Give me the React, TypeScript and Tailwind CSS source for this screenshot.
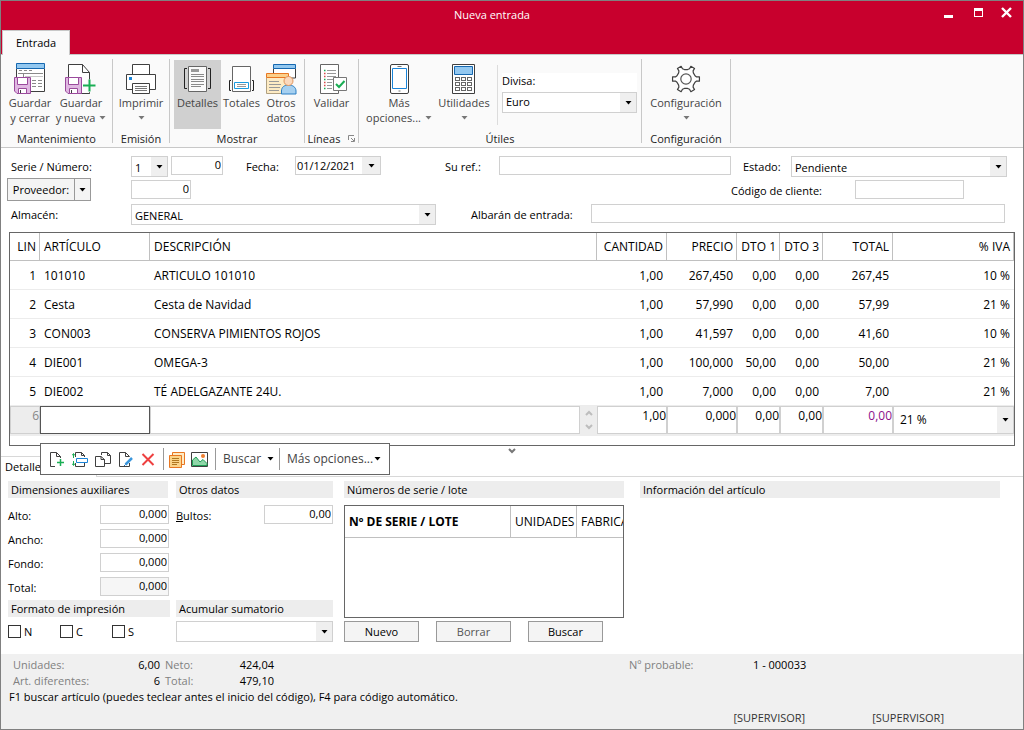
import React, { useId } from "react";

const INK = "#3f3f3f";

/* ---------- Small shared pieces ---------- */

function Caret({ className = "fill-black" }: { className?: string }) {
  return (
    <svg width="7" height="4" viewBox="0 0 7 4" className={className} aria-hidden="true">
      <path d="M0.5 0h6L3.5 3.5z" />
    </svg>
  );
}

function Select({ id, value, className = "", label }: { id?: string; value: string; className?: string; label?: string }) {
  return (
    <div className={`relative h-[21px] border border-[#d0d0d0] bg-white ${className}`}>
      <select id={id} aria-label={label} className="block h-full w-full appearance-none bg-transparent pl-[3px] pr-4 outline-none">
        <option>{value}</option>
      </select>
      <span className="pointer-events-none absolute inset-y-0 right-0 flex w-4 items-center justify-center bg-[#efefef]">
        <Caret />
      </span>
    </div>
  );
}

function TextField({ id, value = "", className = "", readOnly, label }: { id?: string; value?: string; className?: string; readOnly?: boolean; label?: string }) {
  return (
    <input
      id={id}
      aria-label={label}
      defaultValue={value}
      readOnly={readOnly}
      className={`h-[19px] border border-[#d0d0d0] px-px pb-[2px] outline-none ${readOnly ? "bg-[#f6f6f6]" : "bg-white"} ${className}`}
    />
  );
}

/* ---------- Ribbon icons ---------- */

function Icon({ children }: { children: React.ReactNode }) {
  return (
    <svg width="32" height="32" viewBox="0 0 32 32" fill="none" stroke={INK} className="shrink-0" aria-hidden="true">
      {children}
    </svg>
  );
}

function Floppy() {
  return (
    <g stroke="#9a4a9c">
      <path d="M0.5 14.5H16.5V30.5H3L0.5 28z" fill="#e0b8e2" />
      <path d="M3.5 14.5H13.5V21.5H3.5z" fill="#fff" />
      <path d="M4.5 25.5H12.5V30.5H4.5z" fill="#fff" />
      <path d="M6.5 27v3" stroke={INK} />
    </g>
  );
}

function SaveCloseIcon() {
  return (
    <Icon>
      <path d="M2.5 5.5V28.5H30.5V5.5" fill="#fff" />
      <path d="M2.5 0.5H30.5V5.5H2.5z" fill="#93c8f0" stroke="#1668b0" />
      <g stroke="#8a8a8a">
        <path d="M5 7.5h3M10 7.5h3M15 7.5h3M4 10.5h25M9.5 10.5v4M18 17.5h4M24 17.5h4M18 20.5h4M24 20.5h4M18 23.5h4M24 23.5h4" />
        <path d="M11 13.5h18" stroke="#c8c8c8" />
      </g>
      <Floppy />
    </Icon>
  );
}

function SaveNewIcon() {
  return (
    <Icon>
      <path d="M3.5 14V1.5H17.5L24.5 9.5V30.5H14" fill="#fff" />
      <path d="M17.5 1.5V9.5H24.5" />
      <Floppy />
      <path d="M18 23h13M24.5 16.5v13" stroke="#fafafa" strokeWidth="5" />
      <path d="M18 22.5h12.5M24.5 16.5v12" stroke="#1aae54" strokeWidth="2" />
      <path d="M24.5 29.5v1" />
    </Icon>
  );
}

function PrinterIcon() {
  return (
    <Icon>
      <path d="M7.5 11.5V1.5H24.5V11.5" fill="#fff" />
      <path d="M1.5 11.5H30.5V26.5H1.5z" fill="#fff" />
      <path d="M4 14h3v3h-3z" fill="#1a84d8" stroke="none" />
      <path d="M7.5 20.5H24.5V30.5H7.5z" fill="#fff" />
      <path d="M10 23.5h12M10 25.5h12M10 27.5h12" stroke="#777" />
    </Icon>
  );
}

function DetailsIcon() {
  return (
    <Icon>
      <path d="M6.5 3.5H24.5V28.5H6.5z" fill="#fafafa" stroke="#666" />
      <path d="M5 5.5H2.5V25.5H5M26 5.5H28.5V25.5H26" stroke="#222" />
      <path d="M9 6h8v3h-8z" fill="#999" stroke="none" />
      <path d="M9 11.5h13M9 13.5h13M9 16.5h13M9 18.5h13M9 21.5h13M9 23.5h10" stroke="#8a8a8a" />
    </Icon>
  );
}

function TotalsIcon() {
  return (
    <Icon>
      <path d="M6.5 3.5H24.5V28.5H6.5z" fill="#fff" stroke="#666" />
      <path d="M5 17.5H3.5V27.5H5M26 17.5H27.5V27.5H26" stroke="#222" />
      <path d="M8.5 19.5H22.5V25.5H8.5z" fill="#fff" stroke="#1a9be0" />
      <path d="M11 21.5h9M11 23.5h9" stroke="#999" />
    </Icon>
  );
}

function OtherDataIcon() {
  return (
    <Icon>
      <path d="M8.5 5.5V15H30.5V5.5" fill="#fff" />
      <path d="M8.5 1.5H30.5V5.5H8.5z" fill="#93c8f0" stroke="#1668b0" />
      <path d="M1.5 14.5V30.5H23.5V14.5" fill="#fdebc4" stroke="#b0a080" />
      <path d="M1.5 10.5H23.5V14.5H1.5z" fill="#fbd08a" stroke="#e87722" />
      <path d="M4 18.5h10M4 21.5h12M4 24.5h11M4 27.5h10" stroke="#999" />
      <path d="M16.5 31V28c0-4 3-6 7-6s7.5 2 7.5 6v3z" fill="#a6d0f0" stroke="#2a7fc4" />
      <circle cx="23.5" cy="18" r="4.5" fill="#fbd9bd" stroke="#e0945c" />
    </Icon>
  );
}

function ValidateIcon() {
  return (
    <Icon>
      <path d="M4.5 1.5H22.5V30.5H4.5z" fill="#fff" stroke="#666" />
      <path d="M11 7.5h9M11 10.5h9M11 13.5h9M11 16.5h6M11 19.5h5M11 22.5h5M11 25.5h5" stroke="#999" />
      <path d="M8 7.5h1.5M8 16.5h1.5M8 25.5h1.5" stroke="#1aae54" strokeWidth="1.5" />
      <path d="M8 10.5h1.5M8 13.5h1.5M8 19.5h1.5M8 22.5h1.5" stroke="#d84a4a" strokeWidth="1.5" />
      <path d="M17.5 14.5H30.5V27.5H17.5z" fill="#fff" stroke="#777" />
      <path d="M20 21l3 3 5.5-6" stroke="#1aae54" strokeWidth="2" />
    </Icon>
  );
}

function PhoneIcon() {
  return (
    <Icon>
      <rect x="7.5" y="1.5" width="18" height="29" rx="1.5" fill="#fff" />
      <path d="M9.5 5.5H23.5V25.5H9.5z" fill="#fff" stroke="#1a84d8" />
      <path d="M14.5 3.5h4M15.5 28h2" stroke="#777" />
    </Icon>
  );
}

function CalculatorIcon() {
  return (
    <Icon>
      <path d="M4.5 1.5H26.5V30.5H4.5z" fill="#fff" />
      <path d="M6.5 3.5H24.5V11.5H6.5z" fill="#93c8f0" stroke="#1668b0" />
      <g stroke="#666">
        {[14.5, 19.5, 24.5].map((y) =>
          [7.5, 13.5, 19.5].map((x) => <rect key={`${x}-${y}`} x={x} y={y} width="4" height="3" fill="#fff" />),
        )}
      </g>
    </Icon>
  );
}

function gearPath(cx: number, cy: number) {
  const pts: string[] = [];
  for (let i = 0; i < 6; i++) {
    const mid = i * 60;
    for (const [off, r] of [[-20, 9.6], [-11, 10.8], [-9, 13.6], [9, 13.6], [11, 10.8], [20, 9.6]]) {
      const a = ((mid + off) * Math.PI) / 180;
      pts.push(`${(cx + r * Math.cos(a)).toFixed(2)} ${(cy + r * Math.sin(a)).toFixed(2)}`);
    }
  }
  return `M${pts.join("L")}Z`;
}

function GearIcon() {
  return (
    <Icon>
      <path d={gearPath(16, 16)} fill="#fff" strokeWidth="1.2" strokeLinejoin="round" />
      <circle cx="16" cy="16" r="5.2" stroke="#555" strokeWidth="1.2" />
    </Icon>
  );
}

/* ---------- Ribbon ---------- */

function RibbonButton({
  icon,
  lines,
  caret,
  active,
  className = "",
}: {
  icon: React.ReactNode;
  lines: string[];
  caret?: boolean;
  active?: boolean;
  className?: string;
}) {
  return (
    <button
      type="button"
      className={`flex h-[69px] flex-col items-center whitespace-nowrap pt-[3px] leading-[15px] text-[#444] ${active ? "bg-[#d0d0d0]" : ""} ${className}`}
    >
      {icon}
      <span>{lines[0]}</span>
      <span className="flex h-[15px] items-center gap-1">
        {lines[1]}
        {caret && <Caret className="fill-[#777]" />}
      </span>
    </button>
  );
}

function RibbonGroup({
  title,
  className = "",
  bodyClassName = "",
  launcher,
  children,
}: {
  title: string;
  className?: string;
  bodyClassName?: string;
  launcher?: boolean;
  children: React.ReactNode;
}) {
  return (
    <section className={`flex h-[84px] flex-col border-r border-[#c8c8c8] pt-px ${className}`}>
      <div className={`flex h-[69px] shrink-0 justify-center ${bodyClassName}`}>{children}</div>
      <h2 className="flex h-[15px] items-center justify-center gap-2 pt-[3px] leading-[15px] text-[#222]">
        {title}
        {launcher && (
          <svg width="7" height="7" viewBox="0 0 7 7" fill="none" stroke="#888" aria-hidden="true">
            <path d="M0.5 5V0.5H6M3 3l3 3M6.5 3v3.5H3" />
          </svg>
        )}
      </h2>
    </section>
  );
}

function Ribbon() {
  return (
    <div className="flex border-b border-[#c8c8c8] bg-[#fafafa] pt-1 pb-1">
      <RibbonGroup title="Mantenimiento" className="w-[112px]" bodyClassName="pr-[3px]">
        <RibbonButton icon={<SaveCloseIcon />} lines={["Guardar", "y cerrar"]} className="w-[52px]" />
        <RibbonButton icon={<SaveNewIcon />} lines={["Guardar", "y nueva"]} caret className="w-[50px]" />
      </RibbonGroup>
      <RibbonGroup title="Emisión" className="w-[57px]">
        <RibbonButton icon={<PrinterIcon />} lines={["Imprimir", ""]} caret className="w-[50px]" />
      </RibbonGroup>
      <RibbonGroup title="Mostrar" className="w-[135px]">
        <RibbonButton icon={<DetailsIcon />} lines={["Detalles", ""]} active className="w-[47px]" />
        <RibbonButton icon={<TotalsIcon />} lines={["Totales", ""]} className="w-[41px]" />
        <RibbonButton icon={<OtherDataIcon />} lines={["Otros", "datos"]} className="w-[38px]" />
      </RibbonGroup>
      <RibbonGroup title="Líneas" launcher className="w-[54px]">
        <RibbonButton icon={<ValidateIcon />} lines={["Validar", ""]} className="w-[48px]" />
      </RibbonGroup>
      <RibbonGroup title="Útiles" className="w-[283px]">
        <RibbonButton icon={<PhoneIcon />} lines={["Más", "opciones..."]} caret className="w-[72px]" />
        <RibbonButton icon={<CalculatorIcon />} lines={["Utilidades", ""]} caret className="w-[58px]" />
        <div className="ml-1 mt-[5px] flex h-[60px] flex-col border-l border-[#dcdcdc] pl-1 pt-2">
          <label htmlFor="divisa" className="block h-[19px] bg-white leading-[15px]">
            Divisa:
          </label>
          <Select id="divisa" value="Euro" className="w-[135px]" />
        </div>
      </RibbonGroup>
      <RibbonGroup title="Configuración" className="w-[89px]">
        <RibbonButton icon={<GearIcon />} lines={["Configuración", ""]} caret className="w-[80px]" />
      </RibbonGroup>
    </div>
  );
}

/* ---------- Title bar ---------- */

function TitleBar() {
  return (
    <header className="flex flex-col bg-[#c8002d]">
      <div className="grid h-[29px] grid-cols-[1fr_auto_1fr] items-center pr-10">
        <span />
        <h1 className="text-white">Nueva entrada</h1>
        <div className="-mr-[30px] flex items-start justify-end gap-[18px] pb-[6px]">
          <button type="button" aria-label="Minimizar" className="flex h-3 w-3 items-end justify-end pb-px">
            <span className="h-[3px] w-[9px] bg-white" />
          </button>
          <button type="button" aria-label="Maximizar" className="flex h-3 w-3 items-center justify-end">
            <span className="h-[9px] w-[9px] border border-t-[3px] border-white" />
          </button>
          <button type="button" aria-label="Cerrar" className="flex h-3 w-3 items-center">
            <svg width="11" height="11" viewBox="0 0 11 11" stroke="#fff" strokeWidth="2.4">
              <path d="M1 1l9 9M10 1l-9 9" />
            </svg>
          </button>
        </div>
      </div>
      <nav className="flex border-b border-[#c8c8c8] pl-px">
        <button type="button" className="-mb-px h-[25px] w-[68px] border border-b-0 border-[#c8c8c8] bg-[#fafafa]">
          Entrada
        </button>
      </nav>
    </header>
  );
}

/* ---------- Document header form ---------- */

function HeaderForm() {
  return (
    <form className="flex flex-col pt-2 pr-[18px] pl-[10px]">
      <div className="flex h-6 items-start leading-[21px]">
        <label htmlFor="serie" className="w-[120px]">Serie / Número:</label>
        <Select id="serie" value="1" className="w-[37px]" />
        <TextField label="Número" value="0" className="ml-[3px] w-[52px] text-right" />
        <label htmlFor="fecha" className="ml-[23px] w-[49px]">Fecha:</label>
        <div className="flex h-[19px] w-[86px] border border-[#d0d0d0]">
          <input id="fecha" defaultValue="01/12/2021" className="w-full min-w-0 bg-white pl-px outline-none" />
          <button type="button" aria-label="Abrir calendario" className="flex w-[18px] shrink-0 items-center justify-center bg-[#efefef]">
            <Caret />
          </button>
        </div>
        <label htmlFor="ref" className="ml-16 w-[54px]">Su ref.:</label>
        <TextField id="ref" className="min-w-0 grow" />
        <label htmlFor="estado" className="ml-3 w-12">Estado:</label>
        <Select id="estado" value="Pendiente" className="-mr-[2px] w-[216px]" />
      </div>
      <div className="flex h-6 items-start leading-[21px]">
        <div className="-mt-[2px] -ml-1 flex h-[23px] w-[84px] border border-[#999] bg-[#f4f4f4]">
          <button type="button" className="grow">Proveedor:</button>
          <button type="button" aria-label="Opciones de proveedor" className="flex w-4 items-center justify-center border-l border-[#999]">
            <Caret />
          </button>
        </div>
        <TextField label="Código de proveedor" value="0" className="ml-10 w-[60px] text-right" />
        <label htmlFor="cliente" className="ml-auto w-[124px]">Código de cliente:</label>
        <TextField id="cliente" className="mr-[41px] w-[109px]" />
      </div>
      <div className="flex h-7 items-start leading-[21px]">
        <label htmlFor="almacen" className="w-[120px]">Almacén:</label>
        <Select id="almacen" value="GENERAL" className="w-[305px]" />
        <label htmlFor="albaran" className="ml-[35px] w-[120px]">Albarán de entrada:</label>
        <TextField id="albaran" className="min-w-0 grow" />
      </div>
    </form>
  );
}

/* ---------- Lines grid ---------- */

const ROWS = [
  ["1", "101010", "ARTICULO 101010", "1,00", "267,450", "0,00", "0,00", "267,45", "10 %"],
  ["2", "Cesta", "Cesta de Navidad", "1,00", "57,990", "0,00", "0,00", "57,99", "21 %"],
  ["3", "CON003", "CONSERVA PIMIENTOS ROJOS", "1,00", "41,597", "0,00", "0,00", "41,60", "10 %"],
  ["4", "DIE001", "OMEGA-3", "1,00", "100,000", "50,00", "0,00", "50,00", "21 %"],
  ["5", "DIE002", "TÉ ADELGAZANTE 24U.", "1,00", "7,000", "0,00", "0,00", "7,00", "21 %"],
];

const HEADERS = ["LIN", "ARTÍCULO", "DESCRIPCIÓN", "CANTIDAD", "PRECIO", "DTO 1", "DTO 3", "TOTAL", "% IVA"];

function isTextColumn(i: number) {
  return i === 1 || i === 2;
}

function LinesGrid() {
  const cell = "block h-7 w-full border border-[#d0d0d0] bg-white pb-[9px] text-right outline-none";
  return (
    <div className="relative mr-2 ml-2 border border-[#666] pb-[9px]">
      <table className="w-full table-fixed border-separate border-spacing-0 text-[12px]">
        <colgroup>
          <col className="w-[30px]" />
          <col className="w-[110px]" />
          <col />
          <col className="w-[70px]" />
          <col className="w-[70px]" />
          <col className="w-[43px]" />
          <col className="w-[43px]" />
          <col className="w-[70px]" />
          <col className="w-[121px]" />
        </colgroup>
        <thead>
          <tr className="h-7">
            {HEADERS.map((h, i) => (
              <th
                key={h}
                className={`border-r border-b border-[#c0c0c0] p-0 font-normal whitespace-nowrap ${isTextColumn(i) ? "pl-1 text-left" : "pr-[3px] text-right"}`}
              >
                {h}
              </th>
            ))}
          </tr>
        </thead>
        <tbody>
          {ROWS.map((row) => (
            <tr key={row[0]} className="h-[29px]">
              {row.map((c, i) => (
                <td
                  key={i}
                  className={`border-b border-[#ececec] p-0 pt-[2px] whitespace-nowrap ${isTextColumn(i) ? "pl-1 text-left" : "pr-1 text-right"}`}
                >
                  {c}
                </td>
              ))}
            </tr>
          ))}
          <tr className="h-[30px] bg-[#ededed] align-top">
            <td className="p-0">
              <div className="h-7 border border-[#d0d0d0] text-right leading-[18px] text-[#888]">6</div>
            </td>
            <td className="p-0">
              <input aria-label="Artículo" className="block h-7 w-full border border-[#555] bg-white px-1 outline-none" />
            </td>
            <td className="p-0">
              <div className="flex">
                <input aria-label="Descripción" className="h-7 min-w-0 grow border border-[#d0d0d0] bg-white px-1 outline-none" />
                <div className="flex h-7 w-[17px] flex-col items-center justify-center gap-2">
                  {["M1 5l3-3 3 3", "M1 1l3 3 3-3"].map((d, i) => (
                    <button key={d} type="button" aria-label={i ? "Bajar" : "Subir"}>
                      <svg width="8" height="6" viewBox="0 0 8 6" fill="none" stroke="#bdbdbd" strokeWidth="2" className="block">
                        <path d={d} />
                      </svg>
                    </button>
                  ))}
                </div>
              </div>
            </td>
            <td className="p-0"><input aria-label="Cantidad" defaultValue="1,00" className={cell} /></td>
            <td className="p-0"><input aria-label="Precio" defaultValue="0,000" className={cell} /></td>
            <td className="p-0"><input aria-label="Dto 1" defaultValue="0,00" className={cell} /></td>
            <td className="p-0"><input aria-label="Dto 3" defaultValue="0,00" className={cell} /></td>
            <td className="p-0"><input aria-label="Total" defaultValue="0,00" className={`${cell} text-[#8b108b]`} /></td>
            <td className="p-0">
              <div className="relative h-7 border border-[#d0d0d0] bg-white">
                <select aria-label="% IVA" className="block h-full w-full appearance-none pl-[6px] outline-none">
                  <option>21 %</option>
                </select>
                <span className="pointer-events-none absolute inset-y-0 right-0 flex w-4 items-center justify-center bg-[#efefef]">
                  <Caret />
                </span>
              </div>
            </td>
          </tr>
        </tbody>
      </table>
      <LineToolbar />
    </div>
  );
}

/* ---------- Floating toolbar ---------- */

function ToolIcon({ label, children }: { label: string; children: React.ReactNode }) {
  return (
    <button type="button" aria-label={label} className="shrink-0">
      <svg width="17" height="17" viewBox="0 0 17 17" fill="none" stroke={INK} className="block">
        {children}
      </svg>
    </button>
  );
}

function LineToolbar() {
  return (
    <div className="absolute top-[210px] left-[30px] z-10 flex h-8 w-[350px] items-center border border-[#666] bg-white pl-2 text-[#444]">
      <div className="flex items-center gap-[6px]">
        <ToolIcon label="Nueva línea">
          <path d="M6 15.5H1.5V1.5H7.5L11.5 5.5V7M7.5 1.5V5.5H11.5" />
          <path d="M11.5 8v7M8 11.5h7" stroke="#1aae54" strokeWidth="1.5" />
        </ToolIcon>
        <ToolIcon label="Insertar línea">
          <path d="M3.5 6V1.5H9.5L12.5 4.5V6M9.5 1.5V4.5H12.5M3.5 12v3.5H12.5V12" />
          <path d="M4.5 7.5H15.5V11.5H4.5z" stroke="#1a84d8" fill="#fff" />
          <path d="M1.5 3v4M0 4.5l1.5-2 1.5 2M1.5 10v4M0 12.5l1.5 2 1.5-2" stroke="#1aae54" />
        </ToolIcon>
        <ToolIcon label="Copiar línea">
          <path d="M6.5 4V1.5H12.5L15.5 4.5V12.5H10" />
          <path d="M12.5 1.5V4.5H15.5" />
          <path d="M0.5 5.5H6L9.5 8.5V15.5H0.5zM6 5.5V8.5H9.5" fill="#fff" />
        </ToolIcon>
        <ToolIcon label="Editar línea">
          <path d="M11.5 12V15.5H1.5V1.5H7.5L11.5 5.5M7.5 1.5V5.5H11.5" />
          <path d="M7.5 13.5L14 7" stroke="#3a96dc" strokeWidth="2.5" />
          <path d="M6 15l1.5-1.5" stroke="#1668b0" />
        </ToolIcon>
        <ToolIcon label="Eliminar línea">
          <path d="M1.5 3l11 11M12.5 3l-11 11" stroke="#ee4040" strokeWidth="2" />
        </ToolIcon>
      </div>
      <div className="ml-[5px] flex h-[22px] items-center gap-[6px] border-l border-[#999] pl-1">
        <ToolIcon label="Notas">
          <path d="M4.5 1.5H16.5V13.5H4.5z" fill="#fdebc4" stroke="#e87722" />
          <path d="M1.5 4.5H13.5V16.5H1.5z" fill="#fbd48a" stroke="#e87722" />
          <path d="M4 7.5h7M4 9.5h7M4 11.5h7M4 13.5h5" stroke="#b07820" />
        </ToolIcon>
        <ToolIcon label="Imagen">
          <path d="M0.5 1.5H16.5V15.5H0.5z" fill="#fff" />
          <path d="M1.5 14.5V9L5 6l4 5 3-2.5 4 4v2z" fill="#8fd6a8" stroke="#1f9d55" />
          <circle cx="12" cy="5" r="2" fill="#f08030" stroke="none" />
        </ToolIcon>
      </div>
      <button type="button" className="ml-[7px] flex h-[22px] items-center gap-2 border-l border-[#999] pl-[7px] text-[12px]">
        <span className="w-9 text-left">Buscar</span>
        <Caret />
      </button>
      <button type="button" className="ml-[5px] flex h-[22px] items-center border-l border-[#999] pl-[7px] text-[12px] whitespace-nowrap">
        <span className="w-[87px] text-left">Más opciones...</span>
        <Caret />
      </button>
    </div>
  );
}

/* ---------- Details panel ---------- */

function PanelTitle({ children, className = "" }: { children: React.ReactNode; className?: string }) {
  return <h3 className={`h-[17px] bg-[#ededed] pl-[3px] leading-[17px] whitespace-nowrap ${className}`}>{children}</h3>;
}

function NumberRow({ label, value, readOnly }: { label: React.ReactNode; value: string; readOnly?: boolean }) {
  const id = useId();
  return (
    <div className="flex h-6 items-start justify-between leading-[21px]">
      <label htmlFor={id}>{label}</label>
      <TextField id={id} value={value} readOnly={readOnly} className="w-[69px] text-right" />
    </div>
  );
}

function PushButton({ children, disabled }: { children: React.ReactNode; disabled?: boolean }) {
  return (
    <button type="button" disabled={disabled} className="h-[21px] w-[75px] border border-[#999] bg-[#f4f4f4] pt-[2px] disabled:text-[#555]">
      {children}
    </button>
  );
}

function DetailsPanel() {
  return (
    <div className="grid grow grid-cols-[160px_160px_288px_1fr] gap-x-2 pt-1 pr-[23px] pb-3 pl-[7px]">
      <div className="flex flex-col">
        <PanelTitle>Dimensiones auxiliares</PanelTitle>
        <div className="-mr-px h-[102px] pt-[7px]">
          <NumberRow label="Alto:" value="0,000" />
          <NumberRow label="Ancho:" value="0,000" />
          <NumberRow label="Fondo:" value="0,000" />
          <NumberRow label="Total:" value="0,000" readOnly />
        </div>
        <PanelTitle className="-mr-[2px]">Formato de impresión</PanelTitle>
        <div className="flex pt-2">
          {["N", "C", "S"].map((l) => (
            <label key={l} className="flex w-[52px] items-center gap-[3px] leading-[13px]">
              <input type="checkbox" className="h-[13px] w-[13px] appearance-none border border-[#333] bg-white checked:bg-[#333]" />
              {l}
            </label>
          ))}
        </div>
      </div>

      <div className="flex flex-col pr-[3px]">
        <PanelTitle>Otros datos</PanelTitle>
        <div className="h-[102px] pt-[7px]">
          <NumberRow label={<><u>B</u>ultos:</>} value="0,00" />
        </div>
        <PanelTitle>Acumular sumatorio</PanelTitle>
        <Select label="Acumular sumatorio" value="" className="mt-1" />
      </div>

      <div className="flex flex-col pr-2">
        <PanelTitle>Números de serie / lote</PanelTitle>
        <div className="mt-[7px] h-[113px] overflow-hidden border border-[#666]">
          <table className="w-[340px] table-fixed border-separate border-spacing-0 text-[12px]">
            <colgroup>
              <col className="w-[166px]" />
              <col className="w-[66px]" />
              <col />
            </colgroup>
            <thead>
              <tr className="h-8">
                <th className="border-r border-b border-[#c0c0c0] p-0 pl-1 text-left font-bold">Nº DE SERIE / LOTE</th>
                <th className="border-r border-b border-[#c0c0c0] p-0 pl-1 text-left font-normal">UNIDADES</th>
                <th className="border-b border-[#c0c0c0] p-0 pl-1 text-left font-normal">FABRICACIÓN</th>
              </tr>
            </thead>
          </table>
        </div>
        <div className="flex gap-[17px] pt-[3px]">
          <PushButton>Nuevo</PushButton>
          <PushButton disabled>Borrar</PushButton>
          <PushButton>Buscar</PushButton>
        </div>
      </div>

      <div>
        <PanelTitle>Información del artículo</PanelTitle>
      </div>
    </div>
  );
}

/* ---------- Status footer ---------- */

function Footer() {
  return (
    <footer className="flex h-[75px] flex-col bg-[#f0f0f0] pt-[3px] text-black">
      <div className="flex">
        <dl className="grid grid-cols-[99px_48px_56px_58px] pl-3 leading-4 whitespace-nowrap">
          <dt className="text-[#808080]">Unidades:</dt>
          <dd className="text-right">6,00</dd>
          <dt className="pl-[5px] text-[#808080]">Neto:</dt>
          <dd className="text-right">424,04</dd>
          <dt className="text-[#808080]">Art. diferentes:</dt>
          <dd className="text-right">6</dd>
          <dt className="pl-[5px] text-[#808080]">Total:</dt>
          <dd className="text-right">479,10</dd>
        </dl>
        <dl className="ml-auto flex w-[394px] leading-4">
          <dt className="w-[124px] text-[#808080]">Nº probable:</dt>
          <dd>1 - 000033</dd>
        </dl>
      </div>
      <p className="pl-2 leading-4">F1 buscar artículo (puedes teclear antes el inicio del código), F4 para código automático.</p>
      <div className="flex justify-end gap-[67px] pt-[5px] pr-[79px] leading-4 text-[#333]">
        <span>[SUPERVISOR]</span>
        <span>[SUPERVISOR]</span>
      </div>
    </footer>
  );
}

export default function App() {
  return (
    <div className="flex min-h-screen flex-col border border-[#808080] bg-white font-['Open_Sans','Noto_Sans',sans-serif] text-[11px] text-black">
      <TitleBar />
      <Ribbon />
      <HeaderForm />
      <LinesGrid />
      <button type="button" aria-label="Contraer detalle" className="flex h-[10px] items-center justify-center">
        <svg width="8" height="6" viewBox="0 0 8 6" fill="none" stroke="#777" strokeWidth="2">
          <path d="M1 1l3 3 3-3" />
        </svg>
      </button>
      <nav className="flex h-[21px]">
        <button type="button" className="w-24 border-t border-r border-[#d8d8d8] pl-1 text-left">
          Detalles
        </button>
        <span className="grow border-b border-[#d8d8d8]" />
      </nav>
      <DetailsPanel />
      <Footer />
    </div>
  );
}
